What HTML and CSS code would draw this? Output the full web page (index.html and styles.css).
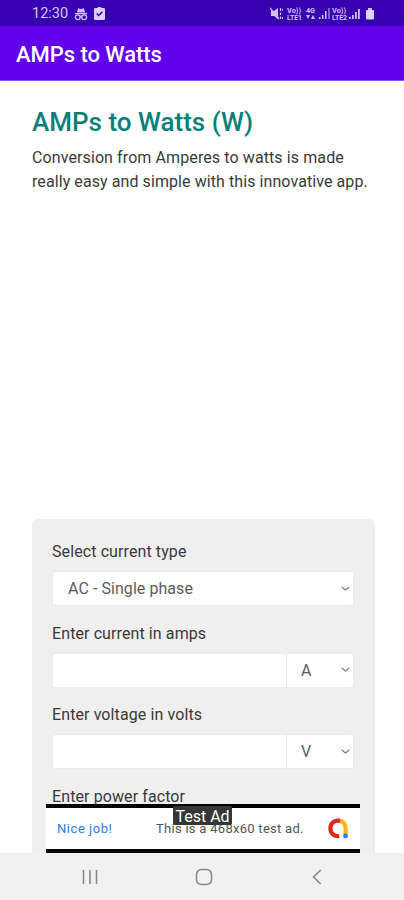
FILE: index.html
```html
<!DOCTYPE html>
<html lang="en">
<head>
<meta charset="utf-8">
<title>AMPs to Watts</title>
<link rel="stylesheet" href="styles.css">
</head>
<body>
<div class="screen">
  <div class="status">
    <span class="clock">12:30</span>
    <svg class="spy" width="14" height="14" viewBox="0 0 14 14" fill="#cfc2f3"><path d="M4 1.2 7 2l3-.8 1 4.300H3zM.8 6h12.400v1.300H.8z"/><g fill="none" stroke="#cfc2f3" stroke-width="1.300"><circle cx="3.800" cy="10.200" r="2.400"/><circle cx="10.200" cy="10.200" r="2.400"/><path d="M6 9.600q1-.7 2 0"/></g></svg>
    <svg class="task" width="11" height="13" viewBox="0 0 11 13"><rect y="1" width="11" height="12" rx="1.200" fill="#d9cff6"/><rect x="3.500" width="4" height="2" rx="1" fill="#d9cff6"/><path d="m2.700 6.500 2 2 3.700-3.800" fill="none" stroke="#3900b1" stroke-width="1.500"/></svg>
    <svg class="signals" width="106" height="14" viewBox="0 0 106 14" fill="#cfc2f3">
      <path d="M1 4h3l4-3v11L4 9H1z"/><path d="m0 1 9 11" stroke="#cfc2f3" stroke-width="1.400"/><path d="M10.500 1v3M10.500 5.500v2.500M10.500 9.500v2.500M12.500 2v1.500M12.500 10v2" stroke="#cfc2f3" stroke-width="1.200"/>
      <text x="17" y="6" textLength="14" lengthAdjust="spacingAndGlyphs">Vo))</text><text x="17" y="12.500" textLength="15" lengthAdjust="spacingAndGlyphs">LTE1</text>
      <text x="36" y="6" textLength="9" lengthAdjust="spacingAndGlyphs">4G</text><path d="M36 8h4l-2 4zM41 12h4l-2-4z"/>
      <path d="M49 10h1.500v2H49zM52 8h1.500v4H52zM55 4h1.500v8H55zM58.500 1h1v11h-1z"/>
      <text x="62" y="6" textLength="14" lengthAdjust="spacingAndGlyphs">Vo))</text><text x="62" y="12.500" textLength="15" lengthAdjust="spacingAndGlyphs">LTE2</text>
      <path d="M79 10h1.800v2H79zM82 8h1.800v4H82zM85 5h1.800v7H85zM88 2h1.800v10H88z"/>
      <rect x="96" y="3" width="8" height="9.500" rx="1" fill="#ddd3f8"/><path d="M98 1h4v2h-4z"/>
    </svg>
  </div>
  <header class="appbar">AMPs to Watts</header>
  <main class="content">
    <h1>AMPs to Watts (W)</h1>
    <p class="intro"><span class="line first">Conversion from Amperes to watts is made</span> <span class="line second">really easy and simple with this innovative app.</span></p>
    <form class="panel">
      <div class="group">
        <label>Select current type</label>
        <div class="field"><span class="choice">AC - Single phase</span><svg class="chev" width="9" height="6" viewBox="0 0 9 6"><path d="m.8 1 3.700 3L8.200 1"/></svg></div>
      </div>
      <div class="group">
        <label>Enter current in amps</label>
        <div class="field"><span class="entry"></span><span class="unit">A</span><svg class="chev" width="9" height="6" viewBox="0 0 9 6"><path d="m.8 1 3.700 3L8.200 1"/></svg></div>
      </div>
      <div class="group">
        <label>Enter voltage in volts</label>
        <div class="field"><span class="entry"></span><span class="unit">V</span><svg class="chev" width="9" height="6" viewBox="0 0 9 6"><path d="m.8 1 3.700 3L8.200 1"/></svg></div>
      </div>
      <div class="group"><label>Enter power factor</label></div>
    </form>
  </main>
  <aside class="ad">
    <span class="nice">Nice job!</span>
    <span class="copy">This is a 468x60 test ad.</span>
    <svg class="admob" width="20" height="21" viewBox="0 0 20 21" fill="none" stroke-width="4.200"><path d="M10 2.700Q17.600 3 17.600 10.500V17" stroke="#fbb60b"/><path d="M12 2.700C6 1.800 2.400 5.600 2.400 10.300c0 5.200 4 8.500 8.800 7.700" stroke="#e5281f"/><circle cx="17.500" cy="18" r="2.400" fill="#367be8"/></svg>
    <span class="badge">Test Ad</span>
  </aside>
  <nav class="nav">
    <svg width="16" height="16" viewBox="0 0 16 16"><path d="M1.500 1v14M8 1v14M14.500 1v14"/></svg>
    <svg class="home" width="18" height="18" viewBox="0 0 18 18"><rect x="1.500" y="1.500" width="15" height="15" rx="5"/></svg>
    <svg width="10" height="16" viewBox="0 0 10 16"><path d="M8.700 1 1.500 8l7.200 7"/></svg>
  </nav>
</div>
</body>
</html>
```
FILE: styles.css
```css
* { box-sizing: border-box; }
body { margin: 0; background: #fff; font-family: Roboto, sans-serif; color: #3a3a3a; }
.screen { position: relative; width: 404px; height: 900px; overflow: hidden; display: flex; flex-direction: column; }
.status { height: 26px; flex: none; background: #3900b1; display: flex; align-items: center; padding: 1px 28px 0 32px; }
.clock { width: 37px; margin-right: 5px; font-size: 14.5px; color: #d3c8f4; white-space: nowrap; }
.task { margin-left: 6px; }
.signals { margin-left: auto; font-size: 6.5px; font-weight: 700; }
.appbar { height: 55px; flex: none; background: #6200ee; border-bottom: 1px solid #8c49ef; color: #fff; font-size: 22px; font-weight: 500; line-height: 57px; padding-left: 16px; letter-spacing: -.05px; }
.content { flex: 1; min-height: 0; overflow: hidden; padding: 25px 29px 0 32px; display: flex; flex-direction: column; }
h1 { margin: 0; font-size: 26px; line-height: 32px; font-weight: 500; color: #087f78; letter-spacing: 0; white-space: nowrap; }
.intro { margin: 8px 0 325px; font-size: 16px; line-height: 24px; }
.line { display: block; white-space: nowrap; }
.first { letter-spacing: .1px; }
.second { letter-spacing: .08px; }
.panel { flex: none; width: 343px; height: 400px; padding: 20px 22px 0 20px; background: #efefef; border-radius: 6px; }
.group { height: 81.5px; }
label { display: block; height: 33px; font-size: 16px; line-height: 25px; letter-spacing: .1px; white-space: nowrap; }
.field { height: 33px; margin-left: 1px; background: #fff; border-radius: 2px; display: flex; align-items: center; padding-right: 3px; box-shadow: 0 0 0 1px #eaeaea; color: #5c5c5c; font-size: 16px; }
.choice { flex: 1; padding-left: 15px; letter-spacing: .06px; }
.entry { width: 234px; height: 33px; border-right: 1px solid #e7e7e7; }
.unit { flex: 1; padding-left: 14px; }
.chev { fill: none; stroke: #777; stroke-width: 1.2; }
.ad { position: absolute; left: 46px; top: 804px; width: 314px; height: 49px; background: #fff; border-top: 4px solid #000; border-bottom: 4px solid #000; display: flex; align-items: center; padding: 0 12px 0 11px; font-size: 13px; }
.nice { width: 99px; color: #2c7be5; letter-spacing: .55px; }
.copy { color: #555; letter-spacing: .28px; white-space: nowrap; }
.admob { margin-left: auto; }
.badge { position: absolute; left: 127px; top: -2px; width: 59px; height: 19px; border-radius: 2px; background: #363636; color: #fff; font-size: 16px; line-height: 21px; text-align: center; white-space: nowrap; }
.nav { height: 47px; flex: none; background: #f1f1f1; display: flex; align-items: center; justify-content: space-between; padding: 0 82px 0 82px; }
.nav svg { fill: none; stroke: #858585; stroke-width: 1.5; }
.nav .home { margin-right: 3px; }
```
